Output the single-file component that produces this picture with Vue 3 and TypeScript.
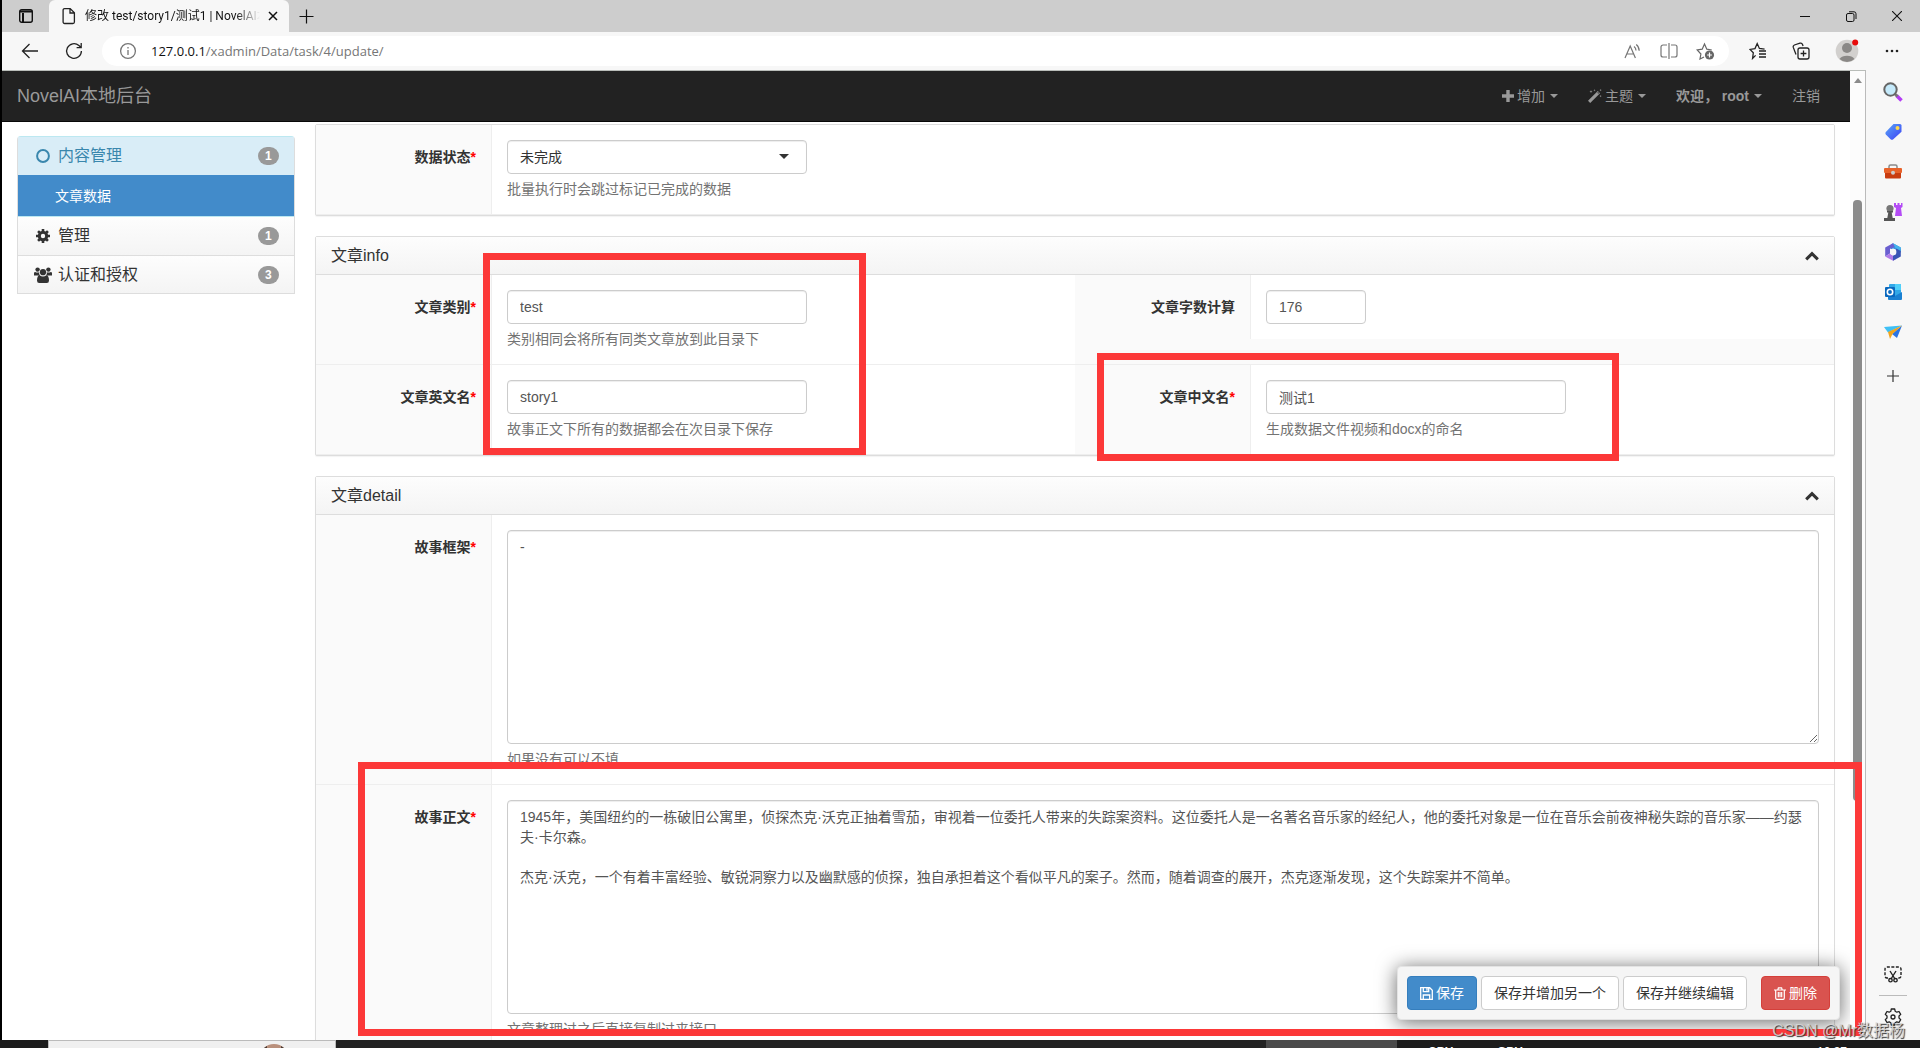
<script setup lang="ts">
import { ref } from 'vue'

interface MenuGroup {
  title: string
  icon: 'circle' | 'gear' | 'users'
  count: number
  active: boolean
  items: string[]
}

const menu: MenuGroup[] = [
  { title: '内容管理', icon: 'circle', count: 1, active: true, items: ['文章数据'] },
  { title: '管理', icon: 'gear', count: 1, active: false, items: [] },
  { title: '认证和授权', icon: 'users', count: 3, active: false, items: [] },
]

const status = ref('未完成')
const category = ref('test')
const wordCount = ref('176')
const nameEn = ref('story1')
const nameZh = ref('测试1')
const outline = ref('-')
const story = ref(
  '1945年，美国纽约的一栋破旧公寓里，侦探杰克·沃克正抽着雪茄，审视着一位委托人带来的失踪案资料。这位委托人是一名著名音乐家的经纪人，他的委托对象是一位在音乐会前夜神秘失踪的音乐家——约瑟夫·卡尔森。\n\n杰克·沃克，一个有着丰富经验、敏锐洞察力以及幽默感的侦探，独自承担着这个看似平凡的案子。然而，随着调查的展开，杰克逐渐发现，这个失踪案并不简单。',
)
</script>

<template>
  <div class="browser">
    <header class="tabs">
      <button class="icon-btn workspace" aria-label="标签页操作">
        <svg width="16" height="16" viewBox="0 0 16 16" fill="none" stroke="#111" stroke-width="1.4">
          <rect x="1.7" y="1.7" width="12.6" height="12.6" rx="2" />
          <path d="M2 3.6h12M5 5v9" stroke-width="2" />
        </svg>
      </button>
      <div class="tab">
        <svg width="16" height="18" viewBox="0 0 16 18" fill="none" stroke="#222" stroke-width="1.3">
          <path d="M3.6 1.6h5.6l4.2 4.2v9.2a1.5 1.5 0 0 1-1.5 1.5H3.6a1.5 1.5 0 0 1-1.5-1.5V3.1a1.5 1.5 0 0 1 1.5-1.5zM9 1.8V6h4.2" />
        </svg>
        <span class="tab-title">修改 test/story1/测试1 | NovelAI本地后台</span>
        <button class="icon-btn" aria-label="关闭标签页">
          <svg width="10" height="10" viewBox="0 0 10 10" stroke="#111" stroke-width="1.5"><path d="M1 1l8 8M9 1L1 9" /></svg>
        </button>
      </div>
      <button class="icon-btn newtab" aria-label="新建标签页">
        <svg width="15" height="15" viewBox="0 0 15 15" stroke="#111" stroke-width="1.2"><path d="M7.5 0.5v14M0.5 7.5h14" /></svg>
      </button>
      <div class="window-buttons">
        <button class="icon-btn" aria-label="最小化">
          <svg width="10" height="10" viewBox="0 0 10 10" stroke="#111"><path d="M0 5.5h10" /></svg>
        </button>
        <button class="icon-btn" aria-label="还原">
          <svg width="11" height="11" viewBox="0 0 11 11" fill="none" stroke="#111"><rect x="0.5" y="2.5" width="7.5" height="8" rx="1.5" /><path d="M3 .8h5a2 2 0 0 1 2 2V8" /></svg>
        </button>
        <button class="icon-btn" aria-label="关闭">
          <svg width="10" height="10" viewBox="0 0 10 10" stroke="#111" stroke-width="1.1"><path d="M0 0l10 10M10 0L0 10" /></svg>
        </button>
      </div>
    </header>

    <div class="toolbar">
      <button class="icon-btn back" aria-label="返回">
        <svg width="18" height="16" viewBox="0 0 18 16" fill="none" stroke="#222" stroke-width="1.3"><path d="M17 8H1.5M8.5 1L1.5 8l7 7" /></svg>
      </button>
      <button class="icon-btn reload" aria-label="刷新">
        <svg width="18" height="18" viewBox="0 0 18 18" fill="none" stroke="#222" stroke-width="1.3"><path d="M16.4 9A7.4 7.4 0 1 1 13.9 3.5l1.8 1.8M16.2 1v4.6h-4.6" /></svg>
      </button>
      <div class="address">
        <svg width="18" height="18" viewBox="0 0 18 18" fill="none" stroke="#767676" stroke-width="1.3"><circle cx="9" cy="9" r="7.4" /><path d="M9 8v5M9 5v1.4" /></svg>
        <span class="url"><b>127.0.0.1</b>/xadmin/Data/task/4/update/</span>
        <button class="icon-btn" aria-label="大声朗读">
          <svg width="18" height="16" viewBox="0 0 18 16" fill="none" stroke="#767676" stroke-width="1.2"><path d="M1 15L6.2 3 11.4 15M2.9 11h6.6M10 3.4q2 1.4 2 4M12.2 1.4q3 2.2 3 6.4" /></svg>
        </button>
        <button class="icon-btn" aria-label="分屏">
          <svg width="18" height="16" viewBox="0 0 18 16" fill="none" stroke="#767676" stroke-width="1.2"><path d="M7 2H3a2 2 0 0 0-2 2v8a2 2 0 0 0 2 2h4M11 2h4a2 2 0 0 1 2 2v8a2 2 0 0 1-2 2h-4M9 0v16" /></svg>
        </button>
        <button class="icon-btn" aria-label="添加到收藏夹">
          <svg width="19" height="18" viewBox="0 0 19 18" fill="none" stroke="#666" stroke-width="1.2">
            <path d="M8 15l-4 2 .9-5L1.2 8l5-.8L8.5 2l2.3 5.2 5 .8" />
            <circle cx="13.5" cy="13" r="4.6" fill="#666" stroke="none" /><path d="M13.5 10.6v4.8M11.1 13h4.8" stroke="#fff" />
          </svg>
        </button>
      </div>
      <div class="tools">
        <button class="icon-btn" aria-label="收藏夹">
          <svg width="18" height="18" viewBox="0 0 18 18" fill="none" stroke="#222" stroke-width="1.3"><path d="M6.6 13.4L3.6 16.4l.7-5.6L1 7.4l5-.8L8.2 1.6l2.2 4.8 5.2.8M10 9h7M10 12h7M10 15h7" /></svg>
        </button>
        <button class="icon-btn" aria-label="集锦">
          <svg width="18" height="18" viewBox="0 0 18 18" fill="none" stroke="#222" stroke-width="1.3"><rect x="6" y="6" width="11" height="11" rx="2" /><path d="M11.5 8.6v5.8M8.6 11.5h5.8M4 12.5L1.3 5.4A2 2 0 0 1 2.4 3L8 1.2a2 2 0 0 1 2.5 1.2l.6 1.6" /></svg>
        </button>
        <button class="icon-btn" aria-label="个人资料">
          <svg width="24" height="24" viewBox="0 0 24 24"><circle cx="12" cy="12" r="11.3" fill="#d2d0ce" /><circle cx="12" cy="9" r="5" fill="#8a8886" /><path d="M4.5 20a8.6 6.2 0 0 1 15 0 11 11 0 0 1-15 0z" fill="#8a8886" /><circle cx="20.2" cy="3.6" r="3" fill="#e80c0c" /></svg>
        </button>
        <button class="icon-btn" aria-label="设置及其他">
          <svg width="16" height="4" viewBox="0 0 16 4" fill="#222"><circle cx="3" cy="2" r="1.3" /><circle cx="8" cy="2" r="1.3" /><circle cx="13" cy="2" r="1.3" /></svg>
        </button>
      </div>
    </div>

    <div class="workarea">
      <div class="page">
        <nav class="navbar">
          <a class="brand" href="#">NovelAI本地后台</a>
          <div class="nav-links">
            <a href="#">
              <svg width="12" height="12" viewBox="0 0 12 12" fill="#999"><path d="M4.3 0h3.4v4.3H12v3.4H7.7V12H4.3V7.7H0V4.3h4.3z" /></svg>
              增加<i class="caret"></i>
            </a>
            <a href="#">
              <svg width="14" height="14" viewBox="0 0 14 14" fill="#999"><path d="M0 11.8L9.8 2l2.2 2.2L2.2 14zM9.3 3.7l1 1 .7-.7-1-1z" fill-rule="evenodd" /><path d="M3 1l.4 1.2L4.6 2.600l-1.200.4L3 4.200l-.4-1.200L1.400 2.600l1.200-.4zM6.500 0l.3.900.9.300-.9.300-.3.900-.3-.9-.9-.3.9-.3zM12.600 0l.3.800.8.300-.8.300-.3.800-.3-.8-.8-.3.8-.3zM12.600 6l.3.800.8.300-.8.300-.3.800-.3-.8-.8-.3.8-.3z" /></svg>
              主题<i class="caret"></i>
            </a>
            <a href="#"><strong>欢迎， root</strong><i class="caret"></i></a>
            <a href="#">注销</a>
          </div>
        </nav>

        <div class="body">
          <aside class="menu">
            <template v-for="group in menu" :key="group.title">
              <a href="#" class="group" :class="{ active: group.active }">
                <span class="group-icon">
                  <svg v-if="group.icon === 'circle'" width="14" height="14" viewBox="0 0 14 14" fill="none" stroke="#3a87ad" stroke-width="2"><circle cx="7" cy="7" r="5.900" /></svg>
                  <svg v-else-if="group.icon === 'gear'" width="14" height="14" viewBox="0 0 14 14" fill="none" stroke="#333"><circle cx="7" cy="7" r="3.700" stroke-width="3" /><path d="M7 0v2.400M7 11.600V14M0 7h2.400M11.600 7H14M2.050 2.050l1.700 1.700M10.250 10.250l1.700 1.700M11.950 2.050l-1.700 1.700M3.750 10.250l-1.700 1.700" stroke-width="2.600" /></svg>
                  <svg v-else width="18" height="16" viewBox="0 0 18 16" fill="#333"><circle cx="3.600" cy="2.600" r="2.200" /><circle cx="14.400" cy="2.600" r="2.200" /><circle cx="9" cy="5.200" r="3.100" /><path d="M0 8.500V6.300Q0 5 1.200 5q2 1 4 .2-.4 2 .8 3.300zM18 8.500V6.300Q18 5 16.800 5q-2 1-4 .2.400 2-.8 3.300zM5.600 8.200Q9 10.600 12.400 8.200 15 8.600 15 13.500q0 2.500-2.200 2.500H5.200Q3 16 3 13.500 3 8.600 5.600 8.200z" /></svg>
                </span>
                <span class="group-title">{{ group.title }}</span>
                <span class="badge">{{ group.count }}</span>
              </a>
              <a v-for="item in group.items" :key="item" href="#" class="item">{{ item }}</a>
            </template>
          </aside>

          <form class="content" @submit.prevent>
            <section class="panel">
              <div class="row">
                <div class="field">
                  <label class="label" for="status">数据状态<em>*</em></label>
                  <div class="control">
                    <div class="select-wrap">
                      <select id="status" v-model="status" class="input">
                        <option>未完成</option>
                        <option>已完成</option>
                      </select>
                    </div>
                    <p class="help">批量执行时会跳过标记已完成的数据</p>
                  </div>
                </div>
              </div>
            </section>

            <section class="panel">
              <h2 class="panel-head">
                文章info
                <button type="button" class="icon-btn" aria-label="收起">
                  <svg width="14" height="10" viewBox="0 0 14 10" fill="none" stroke="#333" stroke-width="3"><path d="M1.200 8.400L7 2.600l5.800 5.800" /></svg>
                </button>
              </h2>
              <div class="row">
                <div class="field">
                  <label class="label" for="category">文章类别<em>*</em></label>
                  <div class="control">
                    <input id="category" v-model="category" class="input" type="text" />
                    <p class="help">类别相同会将所有同类文章放到此目录下</p>
                  </div>
                </div>
                <div class="field second">
                  <label class="label" for="count">文章字数计算</label>
                  <div class="control">
                    <input id="count" v-model="wordCount" class="input short" type="text" />
                  </div>
                </div>
              </div>
              <div class="row">
                <div class="field">
                  <label class="label" for="name-en">文章英文名<em>*</em></label>
                  <div class="control">
                    <input id="name-en" v-model="nameEn" class="input" type="text" />
                    <p class="help">故事正文下所有的数据都会在次目录下保存</p>
                  </div>
                </div>
                <div class="field second">
                  <label class="label" for="name-zh">文章中文名<em>*</em></label>
                  <div class="control">
                    <input id="name-zh" v-model="nameZh" class="input" type="text" />
                    <p class="help">生成数据文件视频和docx的命名</p>
                  </div>
                </div>
              </div>
            </section>

            <section class="panel">
              <h2 class="panel-head">
                文章detail
                <button type="button" class="icon-btn" aria-label="收起">
                  <svg width="14" height="10" viewBox="0 0 14 10" fill="none" stroke="#333" stroke-width="3"><path d="M1.200 8.400L7 2.600l5.800 5.800" /></svg>
                </button>
              </h2>
              <div class="row">
                <div class="field">
                  <label class="label" for="outline">故事框架<em>*</em></label>
                  <div class="control">
                    <textarea id="outline" v-model="outline" class="input area" rows="10"></textarea>
                    <p class="help">如果没有可以不填</p>
                  </div>
                </div>
              </div>
              <div class="row">
                <div class="field">
                  <label class="label" for="story">故事正文<em>*</em></label>
                  <div class="control">
                    <textarea id="story" v-model="story" class="input area" rows="10"></textarea>
                    <p class="help">文章整理过之后直接复制过来接口</p>
                  </div>
                </div>
              </div>
            </section>
          </form>
        </div>

        <div class="actions">
          <button type="button" class="btn primary">
            <svg width="13" height="13" viewBox="0 0 13 13" fill="none" stroke="#fff" stroke-width="1.300"><path d="M.7.700h9l2.600 2.600v9H.700zM3.300 12V8h6.400v4M3.300 1v3.600h5.400V1M7 1.300v2.400" /></svg>
            保存
          </button>
          <button type="button" class="btn">保存并增加另一个</button>
          <button type="button" class="btn">保存并继续编辑</button>
          <button type="button" class="btn danger">
            <svg width="12" height="13" viewBox="0 0 12 13" fill="none" stroke="#fff" stroke-width="1.200"><path d="M0 3h12M3.800 3l.6-2.200h3.200L8.200 3M1.700 3v8q0 1.300 1.200 1.300h6.200q1.200 0 1.200-1.300V3M4.300 5v5.300M6 5v5.300M7.700 5v5.300" /></svg>
            删除
          </button>
        </div>
      </div>

      <div class="scrollbar">
        <i class="arrow"></i>
        <i class="thumb"></i>
      </div>

      <aside class="edge-side">
        <svg width="24" height="24" viewBox="0 0 24 24"><path d="M15.500 15.500l5 5" stroke="#b43cf5" stroke-width="3.600" /><path d="M13.500 13.500l3 3" stroke="#777" stroke-width="2.600" /><circle cx="9.500" cy="9.500" r="6.200" fill="#c5eafb" stroke="#666" stroke-width="2" /></svg>
        <svg width="24" height="24" viewBox="0 0 24 24"><defs><linearGradient id="tag" x1="0" y1="0" x2="1" y2="1"><stop offset="0" stop-color="#5ba8f7" /><stop offset="1" stop-color="#3b3ff5" /></linearGradient></defs><path d="M12.500 4H19q1.500 0 1.500 1.500v6.300L12 19.400q-1.200.9-2.400-.2L4.800 14.400q-1-1.200 0-2.300z" fill="url(#tag)" /><circle cx="16.500" cy="8" r="2" fill="#ffd84a" /></svg>
        <svg width="24" height="24" viewBox="0 0 24 24"><path d="M8 9V6.500Q8 5 9.500 5h5Q16 5 16 6.500V9" fill="none" stroke="#8a8a8a" stroke-width="1.500" /><rect x="3" y="8" width="18" height="5" rx="1" fill="#e8622a" /><path d="M4 13h16v4.500q0 1-1 1H5q-1 0-1-1z" fill="#c83c10" /><circle cx="12" cy="12.800" r="2" fill="#ccc" /></svg>
        <svg width="24" height="24" viewBox="0 0 24 24"><path d="M13 3h2v2h1.500V3h2v2H20V3h1.500v4l-1.500 1 1 8h-7l1-8-2-1z" fill="#b44cf5" /><circle cx="9" cy="8.500" r="3.600" fill="#777" /><path d="M6 11h6v1.500h-1.300l1 5.500H14v3H3v-3h3.300l1-5.500H6z" fill="#555" /></svg>
        <svg width="24" height="24" viewBox="0 0 24 24"><path d="M12 3.200l7.800 4.400v5.200L12 8.400l-2 1V4.400z" fill="#3b8fe0" /><path d="M12 3.200L4.200 7.600v8.800L9 13.500V9l5-2.600z" fill="#6a5fd0" /><path d="M4.200 16.400L12 20.800l3-1.800v-5L12 15.800 9 13.500z" fill="#b07be8" /><path d="M19.800 9v7.400L12 20.800v-5l3-1.800V8.500z" fill="#3a55b5" /><path d="M12 3.200l7.800 4.400V11l-5.300-3z" fill="#45b4ec" /><circle cx="12.200" cy="12" r="3.200" fill="#f7f7f7" /></svg>
        <svg width="24" height="24" viewBox="0 0 24 24"><rect x="8" y="4" width="12" height="12" rx="1" fill="#32a8e8" /><path d="M14 4h5q1 0 1 1v5h-6z" fill="#50d0fa" /><path d="M7 13l7 3 7-4v7q0 1-1 1H8q-1 0-1-1z" fill="#1a80d2" /><rect x="4" y="7" width="10" height="10" rx="1" fill="#0a68be" /><circle cx="9" cy="12" r="2.700" fill="none" stroke="#fff" stroke-width="1.600" /></svg>
        <svg width="24" height="24" viewBox="0 0 24 24"><path d="M3 7l18-1.500-14 7z" fill="#3fc0f5" /><path d="M21 5.500L16 18l-5-4z" fill="#2a74e4" /><path d="M21 5.500L7 12l2 7 2.500-5z" fill="#f2a51c" /></svg>
        <svg class="add" width="24" height="24" viewBox="0 0 24 24" stroke="#333" stroke-width="1.200"><path d="M12 6v12M6 12h12" /></svg>
        <div class="side-bottom">
          <svg width="18" height="18" viewBox="0 0 18 18" fill="none" stroke="#222" stroke-width="1.400"><path d="M4 13H3a2 2 0 0 1-2-2V4a2 2 0 0 1 2-2h12a2 2 0 0 1 2 2v7a2 2 0 0 1-2 2h-1" stroke-dasharray="3 1.500" /><path d="M6 6l5 8M12 6l-5 8" /><circle cx="6.500" cy="15.200" r="1.700" /><circle cx="11.500" cy="15.200" r="1.700" /></svg>
          <hr />
          <svg width="18" height="18" viewBox="0 0 18 18" fill="none" stroke="#222" stroke-width="1.300"><path d="M7.300 1h3.400l.5 2.300 1.600.9 2.200-.7 1.700 2.900L15 8v2l1.700 1.600-1.700 2.900-2.200-.7-1.600.9-.5 2.300H7.300l-.5-2.300-1.600-.9-2.200.7-1.700-2.900L3 10V8L1.300 6.400 3 3.500l2.200.7 1.600-.9z" stroke-linejoin="round" /><circle cx="9" cy="9" r="2" /></svg>
        </div>
      </aside>

      <div class="mark mark-names"></div>
      <div class="mark mark-zh"></div>
      <div class="mark mark-story"></div>
    </div>

    <footer class="taskbar">
      <div class="search-box">
        <svg width="22" height="4" viewBox="0 0 22 4"><path d="M1 4Q5 0 11 0t10 4z" fill="#b9907c" /><path d="M1 4l3-2v2zM21 4l-3-2v2z" fill="#4a3a34" /></svg>
      </div>
      <div class="task-mid"></div>
      <div class="task-active"></div>
      <div class="task-tray">
        <span class="meter">CPU</span>
        <span class="meter">GPU</span>
        <span class="clock">10:37</span>
      </div>
    </footer>
    <div class="watermark">CSDN @Mr数据杨</div>
  </div>
</template>

<style>
body {
  margin: 0;
  overflow: hidden;
}
</style>

<style scoped>
* {
  box-sizing: border-box;
}
.browser {
  position: relative;
  display: flex;
  flex-direction: column;
  height: 100vh;
  background: #fff;
  color: #333;
  font: 14px/20px "Liberation Sans", "Noto Sans CJK SC", sans-serif;
}
a {
  color: inherit;
  text-decoration: none;
}
svg {
  display: block;
  flex: none;
}
.icon-btn {
  display: flex;
  align-items: center;
  justify-content: center;
  padding: 0;
  border: 0;
  background: none;
}

/* tab strip */
.tabs {
  display: flex;
  flex: none;
  height: 32px;
  background: #cdcdcd;
  border-left: 2px solid #000;
}
.workspace {
  width: 47px;
}
.tab {
  display: flex;
  align-items: center;
  gap: 8px;
  width: 240px;
  padding: 0 11px 0 12px;
  border-radius: 6px 6px 0 0;
  background: #f7f7f7;
}
.tab-title {
  flex: 1;
  overflow: hidden;
  color: #111;
  font: 12px/20px Roboto, "Noto Sans CJK SC", sans-serif;
  white-space: nowrap;
  mask-image: linear-gradient(to right, #000 86%, transparent);
}
.newtab {
  width: 34px;
}
.window-buttons {
  display: flex;
  margin-left: auto;
}
.window-buttons .icon-btn {
  width: 46px;
}

/* address row */
.toolbar {
  display: flex;
  flex: none;
  align-items: center;
  height: 38px;
  border-left: 2px solid #000;
  background: #f7f7f7;
}
.back {
  width: 56px;
}
.reload {
  width: 32px;
}
.address {
  display: flex;
  flex: 1;
  align-items: center;
  gap: 18px;
  height: 30px;
  margin-left: 12px;
  padding: 0 14px 0 17px;
  border-radius: 15px;
  background: #fff;
}
.url {
  flex: 1;
  margin-left: -4px;
  color: #767676;
  font: 13px/20px "Open Sans", sans-serif;
}
.url b {
  color: #111;
  font-weight: 400;
}
.tools {
  display: flex;
  align-items: center;
  gap: 25px;
  padding: 0 20px;
}

/* page */
.workarea {
  position: relative;
  display: flex;
  flex: 1;
  min-height: 0;
  overflow: hidden;
  border-left: 2px solid #000;
  background: #f7f7f7;
}
.page {
  position: relative;
  flex: 1;
  min-width: 0;
  overflow: hidden;
  border-top: 1px solid #b9bdb9;
  background: #fff;
}
.navbar {
  position: relative;
  z-index: 1;
  display: flex;
  align-items: center;
  justify-content: space-between;
  height: 51px;
  padding: 0 30px 0 15px;
  border-bottom: 1px solid #080808;
  background: #222;
  color: #999;
}
.brand {
  font-size: 18px;
}
.nav-links {
  display: flex;
  gap: 30px;
}
.nav-links a {
  display: flex;
  align-items: center;
  gap: 3px;
}
.caret {
  width: 0;
  margin-left: 2px;
  border: 4px solid transparent;
  border-top-color: #999;
  border-bottom: 0;
}
.body {
  display: flex;
  align-items: flex-start;
  gap: 20px;
  padding: 0 15px;
}

.menu {
  flex: none;
  width: 278px;
  margin-top: 14px;
  border: 1px solid #ddd;
  border-top-color: #bce8f1;
  border-radius: 4px 4px 0 0;
}
.group {
  display: flex;
  align-items: center;
  height: 38px;
  padding: 0 15px;
  background: linear-gradient(#fdfdfd, #f4f4f4);
  font-size: 16px;
}
.group + .group {
  border-top: 1px solid #ddd;
}
.group.active {
  background: #d9edf7;
  color: #3a87ad;
}
.group-icon {
  display: flex;
  justify-content: center;
  width: 20px;
  margin-right: 5px;
}
.group-title {
  flex: 1;
}
.badge {
  min-width: 21px;
  padding: 0 7px;
  border-radius: 9px;
  background: #999;
  color: #fff;
  font-size: 12px;
  font-weight: 700;
  line-height: 18px;
}
.item {
  display: block;
  padding: 11px 37px 10px;
  border-bottom: 1px solid #bce8f1;
  background: #428bca;
  color: #fff;
}

.content {
  flex: 1;
  min-width: 0;
}
.panel {
  margin-bottom: 20px;
  border: 1px solid #ddd;
  border-radius: 2px;
  background: #fff;
  box-shadow: 0 1px 1px rgba(0, 0, 0, 0.05);
}
.panel:first-child {
  margin-top: 2px;
}
.panel-head {
  display: flex;
  align-items: center;
  justify-content: space-between;
  height: 38px;
  margin: 0;
  padding: 0 15px;
  border-bottom: 1px solid #ddd;
  background: linear-gradient(#fdfdfd, #f4f4f4);
  font-size: 16px;
  font-weight: 400;
}
.row {
  display: flex;
  border-bottom: 1px solid #eee;
}
.field {
  display: flex;
  flex: 1;
  min-width: 0;
}
.second {
  align-items: flex-start;
  background: #fafafa;
}
.label {
  flex: none;
  width: 175px;
  padding: 22px 15px 0 0;
  background: #fafafa;
  font-weight: 700;
  text-align: right;
}
.label em {
  color: #f00;
  font-style: normal;
}
.control {
  flex: 1;
  padding: 15px;
  border-left: 1px solid #eee;
  background: #fff;
}
.select-wrap {
  position: relative;
  width: 300px;
}
.select-wrap::after {
  position: absolute;
  top: 14px;
  right: 18px;
  border: 5px solid transparent;
  border-top-color: #333;
  border-bottom: 0;
  content: "";
}
.input {
  display: block;
  width: 300px;
  height: 34px;
  padding: 6px 12px;
  border: 1px solid #ccc;
  border-radius: 4px;
  background: #fff;
  box-shadow: inset 0 1px 1px rgba(0, 0, 0, 0.075);
  color: #555;
  font: inherit;
}
select.input {
  appearance: none;
  color: #333;
}
.short {
  width: 100px;
}
.area {
  width: 100%;
  height: auto;
  resize: vertical;
  overflow: hidden;
}
.help {
  margin: 5px 0 0;
  color: #737373;
}

.actions {
  position: absolute;
  right: 10px;
  bottom: 20px;
  display: flex;
  gap: 4px;
  padding: 9px;
  border: 1px solid #e3e3e3;
  border-radius: 4px;
  background: #f5f5f5;
  box-shadow: 0 2px 20px rgba(0, 0, 0, 0.6);
}
.btn {
  display: flex;
  align-items: center;
  gap: 3px;
  height: 34px;
  padding: 0 12px;
  border: 1px solid #ccc;
  border-radius: 4px;
  background: #fff;
  color: #333;
  font: inherit;
}
.primary {
  border-color: #357ebd;
  background: #428bca;
  color: #fff;
}
.danger {
  margin-left: 10px;
  border-color: #d43f3a;
  background: #d9534f;
  color: #fff;
}

.scrollbar {
  display: flex;
  flex: none;
  flex-direction: column;
  align-items: center;
  width: 16px;
  border-top: 1px solid #b9bdb9;
  border-right: 1px solid #bbb;
  background: #fcfcfc;
}
.arrow {
  margin: 7px 0 117px;
  border: 4px solid transparent;
  border-bottom: 5px solid #8b8b8b;
  border-top: 0;
}
.thumb {
  width: 9px;
  height: 62%;
  border-radius: 4px;
  background: #8b8b8b;
}
.edge-side {
  display: flex;
  flex: none;
  flex-direction: column;
  align-items: center;
  gap: 16px;
  width: 54px;
  padding-top: 10px;
}
.add {
  margin-top: 4px;
}
.side-bottom {
  display: flex;
  flex-direction: column;
  align-items: center;
  gap: 12px;
  margin-top: auto;
  padding-bottom: 14px;
}
.side-bottom hr {
  width: 28px;
  margin: 0;
  border: 0;
  border-top: 1px solid #bbb;
}

/* highlight frames laid over the page */
.mark {
  position: absolute;
  z-index: 2;
  border: 7px solid #fc3838;
  pointer-events: none;
}
.mark-names {
  top: 183px;
  left: 481px;
  width: 383px;
  height: 202px;
}
.mark-zh {
  top: 283px;
  left: 1095px;
  width: 522px;
  height: 108px;
}
.mark-story {
  top: 692px;
  right: 58px;
  bottom: 4px;
  left: 356px;
}

.taskbar {
  display: flex;
  flex: none;
  height: 8px;
  overflow: hidden;
  padding-left: 48px;
  background: #1c1c1c;
}
.search-box {
  display: flex;
  flex: none;
  align-items: flex-end;
  justify-content: flex-end;
  width: 288px;
  padding-right: 50px;
  border: 1px solid #bbb;
  border-bottom: 0;
  background: #f0f0f0;
}
.task-mid {
  flex: 1;
  background: #222;
}
.task-active {
  width: 131px;
  background: #4a4a4a;
}
.task-tray {
  display: flex;
  width: 523px;
  padding: 4px 73px 0 31px;
  color: #fff;
  font-size: 12px;
  line-height: 16px;
}
.meter {
  width: 69px;
  font-weight: 700;
}
.clock {
  margin-left: auto;
}
.watermark {
  position: absolute;
  right: 15px;
  bottom: 7px;
  z-index: 3;
  color: rgba(215, 215, 215, 0.9);
  font-size: 16px;
  text-shadow: 1px 1px 1px #333;
}
</style>
